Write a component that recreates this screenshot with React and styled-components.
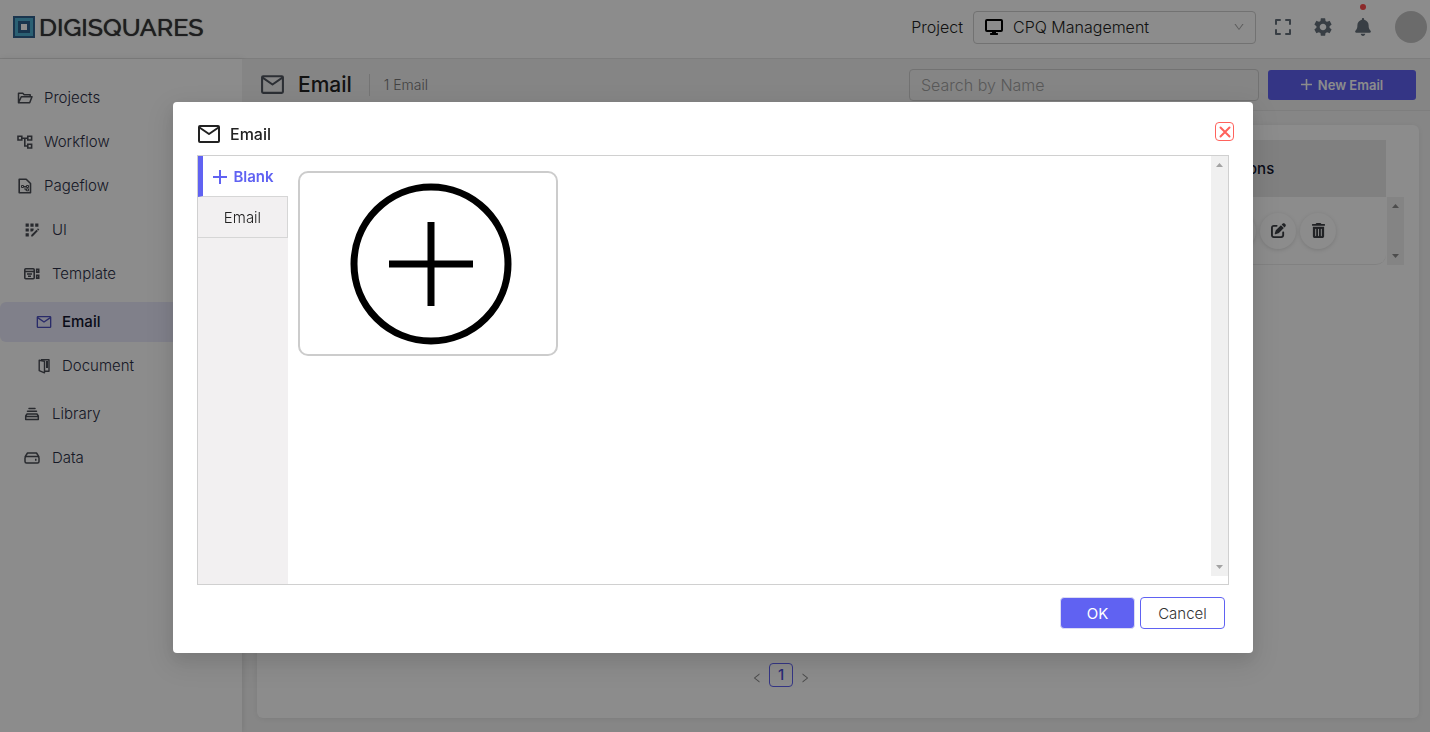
import React from "react";
import styled, { createGlobalStyle, css } from "styled-components";
import { FaPenToSquare, FaTrashCan, FaBell, FaEye } from "react-icons/fa6";
import { MdAppRegistration, MdSettings } from "react-icons/md";
import { AiOutlineLeft, AiOutlineRight, AiOutlineDown } from "react-icons/ai";

const GlobalStyle = createGlobalStyle`
  * { box-sizing: border-box; }
  body {
    margin: 0;
    background: #f5f5f5;
    color: #222;
    font-family: Inter, "Open Sans", sans-serif;
    font-size: 15px;
    font-weight: 300;
    line-height: 24px;
  }
  button, input, select { font: inherit; color: inherit; }
  button { cursor: pointer; }
`;

const Page = styled.div`
  display: flex;
  flex-direction: column;
  min-height: 100vh;
`;

const TopBar = styled.header`
  display: flex;
  align-items: center;
  justify-content: space-between;
  height: 59px;
  padding: 0 3px 4px 13px;
  background: #fff;
  border-bottom: 1px solid #e4e4e4;
`;

const Brand = styled.a`
  display: flex;
  align-items: center;
  gap: 4px;
  color: #38383a;
  text-decoration: none;
  font-family: Raleway, Lato, sans-serif;
  font-size: 25px;
  font-weight: 500;
  text-shadow: 0 0 1px #38383a;
`;

const Tools = styled.div`
  display: flex;
  align-items: center;
  gap: 21px;
`;

const ToolGroup = styled.div`
  display: flex;
  align-items: center;
  gap: 18px;
`;

const ProjectField = styled.label`
  display: flex;
  align-items: center;
  gap: 10px;
  margin-right: -2px;
  font-size: 16px;
`;

const SelectFrame = styled.span`
  display: flex;
  align-items: center;
  gap: 10px;
  width: 283px;
  height: 33px;
  padding: 0 10px 0 11px;
  border: 1px solid #cfcfcf;
  border-radius: 4px;
`;

const Select = styled.select`
  flex: 1;
  appearance: none;
  border: 0;
  padding: 0;
  background: transparent;
`;

const ToolButton = styled.button`
  position: relative;
  display: flex;
  align-items: center;
  justify-content: center;
  width: 22px;
  height: 22px;
  padding: 0;
  border: 0;
  background: none;
  color: #66727c;
`;

const AlertDot = styled.span`
  position: absolute;
  top: -12px;
  left: 8px;
  width: 6px;
  height: 6px;
  border-radius: 50%;
  background: #ff4d4f;
`;

const Avatar = styled.span`
  width: 32px;
  height: 32px;
  border-radius: 50%;
  background: #c4c4c4;
`;

const Columns = styled.div`
  display: flex;
  flex: 1;
`;

const Sidebar = styled.nav`
  flex: none;
  width: 242px;
  padding-top: 19px;
  background: #fff;
  box-shadow: 1px 0 6px rgba(0, 0, 0, 0.1);
`;

const Menu = styled.ul`
  display: flex;
  flex-direction: column;
  gap: 4px;
  margin: 0;
  padding: 0;
  list-style: none;
`;

const SubMenu = styled(Menu)`
  padding: 8px 0 4px;
`;

const levels = {
  root: css`padding-left: 17px; gap: 11px;`,
  nested: css`padding-left: 24px; gap: 12px;`,
  child: css`padding-left: 36px; gap: 10px;`,
};

const MenuLink = styled.a`
  display: flex;
  align-items: center;
  height: 40px;
  border-radius: 6px;
  color: #2a2e45;
  text-decoration: none;
  ${(p) => levels[p.$level]}
  ${(p) => p.$active && css`background: #e9e9fb; color: #11142e; font-weight: 500;`}
  svg { flex: none; width: 16px; color: ${(p) => (p.$active ? "#4c4fc0" : "#4a4d55")}; }
`;

const Main = styled.main`
  display: flex;
  flex: 1;
  flex-direction: column;
  min-width: 0;
`;

const PageBar = styled.div`
  display: flex;
  align-items: center;
  height: 52px;
  padding: 0 14px 0 18px;
  background: #f3f3f3;
  border-bottom: 1px solid #e6e6e6;
  svg { color: #50565f; }
`;

const PageTitle = styled.h1`
  margin: 0 17px 0 13px;
  font-size: 21px;
  font-weight: 500;
`;

const Count = styled.span`
  flex: 1;
  padding-left: 14px;
  border-left: 1px solid #d4d4d4;
  color: #777;
  font-size: 14px;
  line-height: 22px;
`;

const Search = styled.input`
  width: 350px;
  height: 32px;
  margin-right: 9px;
  padding: 0 11px;
  border: 1px solid #cfcfcf;
  border-radius: 4px;
  background: transparent;
  font-size: 16px;
  &::placeholder { color: #a2a2a2; opacity: 1; }
`;

const NewButton = styled.button`
  display: flex;
  align-items: center;
  justify-content: center;
  gap: 6px;
  width: 148px;
  height: 30px;
  border: 0;
  border-radius: 3px;
  background: #6062f2;
  color: #fff;
  font-size: 13px;
  font-weight: 600;
  svg { color: #fff; }
`;

const Card = styled.section`
  display: flex;
  flex: 1;
  flex-direction: column;
  justify-content: space-between;
  margin: 14px 11px 14px 15px;
  padding: 15px 15px 31px;
  border-radius: 6px;
  background: #fff;
  box-shadow: 0 1px 6px rgba(0, 0, 0, 0.08);
`;

const TableArea = styled.div`
  display: flex;
  align-items: flex-end;
  gap: 1px;
`;

const Table = styled.table`
  flex: 1;
  border-collapse: separate;
  border-spacing: 0;
  th {
    height: 57px;
    padding: 0 16px;
    background: #e9e9e9;
    color: #11142e;
    text-align: left;
    font-weight: 500;
  }
  td {
    height: 68px;
    padding: 0 16px;
    border-bottom: 1px solid #ececec;
  }
  th:last-child, td:last-child { width: 182px; }
  td:last-child { border-bottom-right-radius: 10px; }
`;

const RowActions = styled.div`
  display: flex;
  gap: 4px;
`;

const RoundButton = styled.button`
  display: flex;
  align-items: center;
  justify-content: center;
  width: 36px;
  height: 36px;
  padding: 0;
  border: 0;
  border-radius: 50%;
  background: #fff;
  box-shadow: 0 1px 4px rgba(0, 0, 0, 0.14);
  color: #3c3f44;
`;

const Rail = styled.div`
  display: flex;
  flex: none;
  flex-direction: column;
  align-items: center;
  justify-content: space-between;
  width: 17px;
  height: ${(p) => p.$height};
  padding: 7px 0;
  background: #f0f0f0;
  color: ${(p) => p.$color};
`;

const Pager = styled.nav`
  display: flex;
  align-items: center;
  justify-content: center;
  gap: 6px;
  padding-right: 114px;
`;

const PageButton = styled.button`
  display: flex;
  align-items: center;
  justify-content: center;
  width: ${(p) => (p.$current ? "24px" : "12px")};
  height: 24px;
  padding: 0;
  border: ${(p) => (p.$current ? "1px solid #6062f2" : "0")};
  border-radius: 4px;
  background: none;
  color: ${(p) => (p.$current ? "#4d4fd8" : "#8a8a8a")};
  font-weight: 500;
  svg { margin-top: 6px; }
`;

const Mask = styled.div`
  position: fixed;
  inset: 0;
  display: flex;
  align-items: flex-start;
  justify-content: center;
  padding: 102px 4px 24px 0;
  background: rgba(0, 0, 0, 0.45);
`;

const Dialog = styled.section`
  position: relative;
  width: 1080px;
  max-width: 96vw;
  padding: 20px 24px 24px;
  border-radius: 4px;
  background: #fff;
  box-shadow: 0 6px 16px rgba(0, 0, 0, 0.08), 0 9px 28px 8px rgba(0, 0, 0, 0.08);
`;

const DialogTitle = styled.h2`
  display: flex;
  align-items: center;
  gap: 9px;
  height: 24px;
  margin: 0 0 9px;
  font-size: 16px;
  font-weight: 500;
`;

const CloseButton = styled.button`
  position: absolute;
  top: 20px;
  right: 19px;
  display: flex;
  align-items: center;
  justify-content: center;
  width: 19px;
  height: 19px;
  padding: 0;
  border: 1px solid #ff625c;
  border-radius: 4px;
  background: #fff;
  color: #ff625c;
`;

const Picker = styled.div`
  display: flex;
  height: 430px;
  border: 1px solid #d0d0d0;
`;

const TabList = styled.div`
  flex: none;
  width: 90px;
  background: #f2f0f1;
`;

const Tab = styled.button`
  display: flex;
  align-items: center;
  justify-content: center;
  gap: 6px;
  width: 100%;
  height: 41px;
  padding: 2px 0 0;
  border: 1px solid #d6d6d6;
  border-top: 0;
  border-left: 0;
  background: transparent;
  ${(p) => p.$active && css`
    padding-right: 4px;
    border-right: 0;
    border-left: 5px solid #6062f2;
    background: #fff;
    color: #6062f2;
    font-weight: 600;
  `}
`;

const Gallery = styled.div`
  flex: 1;
  padding: 15px 10px;
`;

const TemplateTile = styled.button`
  display: flex;
  align-items: center;
  justify-content: center;
  width: 260px;
  height: 185px;
  padding: 0 0 0 5px;
  border: 2px solid #ccc;
  border-radius: 10px;
  background: #fff;
`;

const DialogActions = styled.div`
  display: flex;
  justify-content: flex-end;
  gap: 5px;
  padding: 12px 4px 0 0;
`;

const ActionButton = styled.button`
  width: ${(p) => (p.$primary ? "75px" : "85px")};
  height: 32px;
  padding: 2px 0 0;
  border: 1px solid ${(p) => (p.$primary ? "#dcdcf4" : "#6062f2")};
  border-radius: 4px;
  background: ${(p) => (p.$primary ? "#6062f2" : "#fff")};
  color: ${(p) => (p.$primary ? "#fff" : "#333")};
  font-weight: ${(p) => (p.$primary ? 400 : 300)};
`;

const LogoMark = () => (
  <svg width="22" height="22" viewBox="0 0 22 22" aria-hidden="true">
    <path fill="#30628f" d="M0 0h22v22H0z" />
    <path fill="#4fb0d2" d="M2 2h18v18H2z" />
    <path fill="#2c5f8d" d="M5 5h12v12H5z" />
    <path fill="#fff" d="M8 8h6v6H8z" />
  </svg>
);

const Envelope = ({ size = 24, stroke = 2 }) => (
  <svg width={size} height={size} viewBox="0 0 24 24" fill="none" stroke="currentColor" strokeWidth={stroke} strokeLinejoin="round" aria-hidden="true">
    <rect x="2" y="4" width="20" height="16" rx="1" />
    <path d="M2.500 5.500L12 12l9.500-6.500" />
  </svg>
);

const Plus = ({ size = 14, stroke = 2 }) => (
  <svg width={size} height={size} viewBox="0 0 14 14" fill="none" stroke="currentColor" strokeWidth={stroke} aria-hidden="true">
    <path d="M7 0v14M0 7h14" />
  </svg>
);

const Monitor = () => (
  <svg width="18" height="16" viewBox="0 0 18 16" aria-hidden="true">
    <rect x="1" y="1" width="16" height="11" rx="1" fill="none" stroke="#000" strokeWidth="2" />
    <path d="M7 12h4v2h1.500q.5 0 .5 1t-.5 1h-7Q5 16 5 15t.5-1H7z" />
  </svg>
);

const Corners = () => (
  <svg width="16" height="16" viewBox="0 0 16 16" fill="none" stroke="currentColor" strokeWidth="2" strokeLinecap="round" strokeLinejoin="round" aria-hidden="true">
    <path d="M1 5V1h4M11 1h4v4M15 11v4h-4M5 15H1v-4" />
  </svg>
);

const FolderIcon = () => (
  <svg height="16" viewBox="0 0 16 16" fill="none" stroke="currentColor" strokeWidth="1.500" strokeLinejoin="round" aria-hidden="true">
    <path d="M1.500 12.800V3.200h4.300l1.400 1.600h6v2M1.500 12.800h11.200l2.300-6H4.300z" />
  </svg>
);

const WorkflowIcon = () => (
  <svg height="16" viewBox="0 0 16 16" fill="none" stroke="currentColor" strokeWidth="1.600" aria-hidden="true">
    <path d="M1 2.200h3.800v3.800H1zM10.800 2.200h3.800v3.800h-3.800zM10.800 10.200h3.800v3.800h-3.800z" />
    <path d="M4.800 4.200h6M7.800 4.200V12h3" />
  </svg>
);

const PageflowIcon = () => (
  <svg height="16" viewBox="0 0 16 16" fill="none" stroke="currentColor" strokeWidth="1.600" aria-hidden="true">
    <path d="M2.200 1.200h7l4.300 4.300v9.300H2.200z" strokeLinejoin="round" />
    <path d="M4.500 7.500h2v2h-2zM9.500 7.500h2v2h-2zM9.500 10.800h2v2h-2zM6.500 8.500h3M8 8.500v3.300h1.500" strokeWidth="1" />
  </svg>
);

const TemplateIcon = () => (
  <svg height="16" viewBox="0 0 16 16" fill="none" stroke="currentColor" strokeWidth="1.600" aria-hidden="true">
    <rect x=".8" y="2.800" width="9.400" height="10" rx="1" />
    <path d="M1 5.500h9M3 8h5M4 10.200h3" />
    <path d="M12.700 3.300h2v2.800h-2zM12.700 9.300h2v2.800h-2z" />
  </svg>
);

const DocumentIcon = () => (
  <svg height="16" viewBox="0 0 16 16" fill="none" stroke="currentColor" strokeWidth="1.400" strokeLinejoin="round" aria-hidden="true">
    <path d="M3.200 2.200l5.300 1v11.600l-5.300-2.200z" />
    <path d="M5 1.800h8v11.400H9" />
    <path d="M11 3v7" strokeWidth="2" />
  </svg>
);

const LibraryIcon = () => (
  <svg height="16" viewBox="0 0 16 16" fill="none" stroke="currentColor" strokeWidth="1.500" strokeLinecap="round" strokeLinejoin="round" aria-hidden="true">
    <path d="M5 2.500h6M3.500 5.200h9" />
    <path d="M3 8h10l1.300 2v3.500H1.700V10zM1.700 10.500h12.600" />
  </svg>
);

const DataIcon = () => (
  <svg height="16" viewBox="0 0 16 16" fill="none" stroke="currentColor" strokeWidth="1.500" strokeLinejoin="round" aria-hidden="true">
    <path d="M1 6.800L3.500 3h9L15 6.800" />
    <rect x="1" y="6.500" width="14" height="6.500" rx="1.500" />
    <path d="M11 9.700h1.500" strokeWidth="2" />
  </svg>
);

const Arrow = ({ down }) => (
  <svg width="7" height="4" viewBox="0 0 7 4" aria-hidden="true">
    <path fill="currentColor" d={down ? "M0 0h7L3.500 4z" : "M0 4h7L3.500 0z"} />
  </svg>
);

const CircledPlus = () => (
  <svg width="162" height="162" viewBox="0 0 162 162" fill="none" stroke="#000" strokeWidth="7" aria-hidden="true">
    <circle cx="81" cy="81" r="77" />
    <path d="M81 39v84M39 81h84" />
  </svg>
);

const Cross = () => (
  <svg width="12" height="12" viewBox="0 0 12 12" stroke="currentColor" strokeWidth="2" strokeLinecap="round" aria-hidden="true">
    <path d="M1.500 1.500l9 9M10.500 1.500l-9 9" />
  </svg>
);

const ScrollRail = ({ height, color }) => (
  <Rail $height={height} $color={color}>
    <Arrow />
    <Arrow down />
  </Rail>
);

const MenuItem = ({ icon, label, level = "root", active, children }) => (
  <li>
    <MenuLink href="#" $level={level} $active={active} aria-current={active ? "page" : undefined}>
      {icon}
      {label}
    </MenuLink>
    {children}
  </li>
);

export default function App() {
  return (
    <>
      <GlobalStyle />
      <Page>
        <TopBar>
          <Brand href="#"><LogoMark />DIGISQUARES</Brand>
          <Tools>
            <ToolGroup>
              <ProjectField>
                Project
                <SelectFrame>
                  <Monitor />
                  <Select defaultValue="cpq">
                    <option value="cpq">CPQ Management</option>
                  </Select>
                  <AiOutlineDown size={12} color="#aaa" />
                </SelectFrame>
              </ProjectField>
              <ToolButton aria-label="Full screen"><Corners /></ToolButton>
              <ToolButton aria-label="Settings"><MdSettings size={22} /></ToolButton>
              <ToolButton aria-label="Notifications"><FaBell size={18} /><AlertDot /></ToolButton>
            </ToolGroup>
            <Avatar />
          </Tools>
        </TopBar>
        <Columns>
          <Sidebar>
            <Menu>
              <MenuItem icon={<FolderIcon />} label="Projects" />
              <MenuItem icon={<WorkflowIcon />} label="Workflow" />
              <MenuItem icon={<PageflowIcon />} label="Pageflow" />
              <MenuItem icon={<MdAppRegistration viewBox="2 2 20 20" size={16} />} label="UI" level="nested" />
              <MenuItem icon={<TemplateIcon />} label="Template" level="nested">
                <SubMenu>
                  <MenuItem icon={<Envelope size={18} />} label="Email" level="child" active />
                  <MenuItem icon={<DocumentIcon />} label="Document" level="child" />
                </SubMenu>
              </MenuItem>
              <MenuItem icon={<LibraryIcon />} label="Library" level="nested" />
              <MenuItem icon={<DataIcon />} label="Data" level="nested" />
            </Menu>
          </Sidebar>
          <Main>
            <PageBar>
              <Envelope size={25} />
              <PageTitle>Email</PageTitle>
              <Count>1 Email</Count>
              <Search type="search" placeholder="Search by Name" aria-label="Search by Name" />
              <NewButton><Plus size={11} />New Email</NewButton>
            </PageBar>
            <Card>
              <TableArea>
                <Table>
                  <thead>
                    <tr><th>Name</th><th>Actions</th></tr>
                  </thead>
                  <tbody>
                    <tr>
                      <td>Email</td>
                      <td>
                        <RowActions>
                          <RoundButton aria-label="View"><FaEye size={15} /></RoundButton>
                          <RoundButton aria-label="Edit"><FaPenToSquare size={15} /></RoundButton>
                          <RoundButton aria-label="Delete"><FaTrashCan size={15} /></RoundButton>
                        </RowActions>
                      </td>
                    </tr>
                  </tbody>
                </Table>
                <ScrollRail height="68px" color="#8c8c8c" />
              </TableArea>
              <Pager aria-label="Pages">
                <PageButton aria-label="Previous"><AiOutlineLeft size={12} /></PageButton>
                <PageButton $current aria-current="page">1</PageButton>
                <PageButton aria-label="Next"><AiOutlineRight size={12} /></PageButton>
              </Pager>
            </Card>
          </Main>
        </Columns>
      </Page>
      <Mask>
        <Dialog role="dialog" aria-modal="true" aria-labelledby="dialog-title">
          <DialogTitle id="dialog-title"><Envelope size={24} />Email</DialogTitle>
          <CloseButton aria-label="Close"><Cross /></CloseButton>
          <Picker>
            <TabList role="tablist">
              <Tab role="tab" aria-selected="true" $active><Plus />Blank</Tab>
              <Tab role="tab" aria-selected="false">Email</Tab>
            </TabList>
            <Gallery role="tabpanel">
              <TemplateTile aria-label="Blank template"><CircledPlus /></TemplateTile>
            </Gallery>
            <ScrollRail height="420px" color="#a3a3a3" />
          </Picker>
          <DialogActions>
            <ActionButton $primary>OK</ActionButton>
            <ActionButton>Cancel</ActionButton>
          </DialogActions>
        </Dialog>
      </Mask>
    </>
  );
}
